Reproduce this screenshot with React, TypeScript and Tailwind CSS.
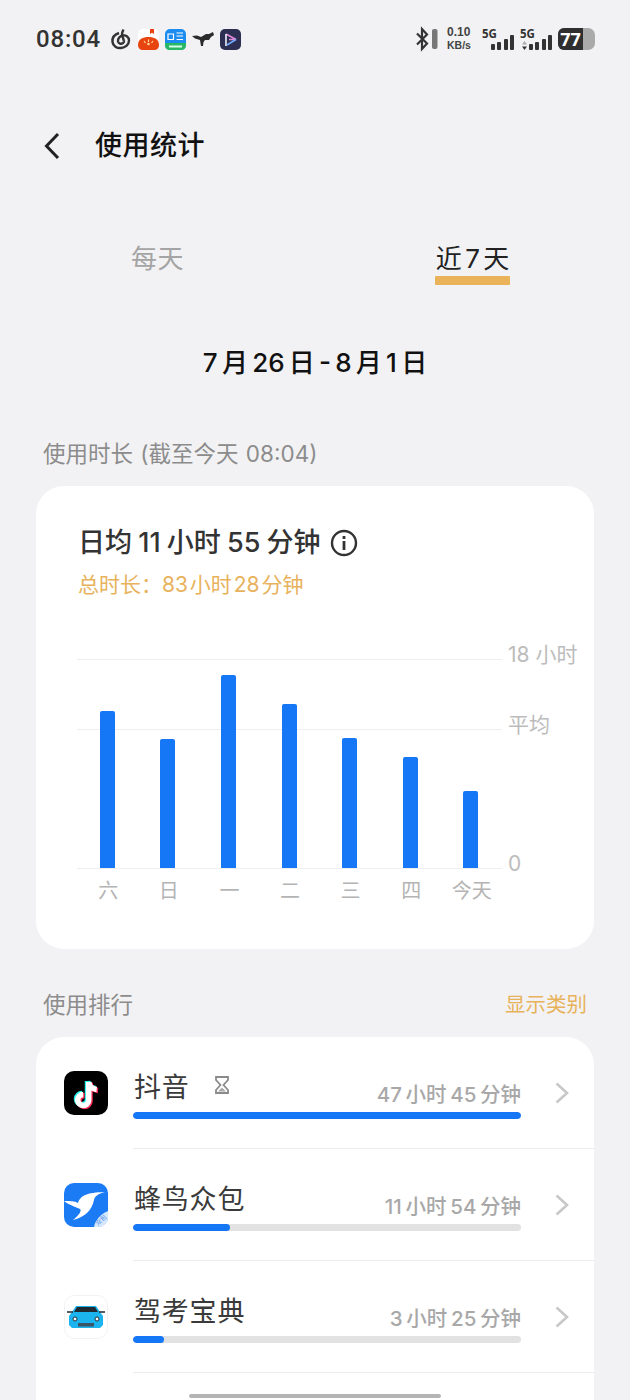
import React from "react";

const FONT = 'Inter,"Noto Sans CJK SC","Noto Sans",sans-serif';

const bars = [
  { label: "六", h: 157 },
  { label: "日", h: 129 },
  { label: "一", h: 193 },
  { label: "二", h: 164 },
  { label: "三", h: 130 },
  { label: "四", h: 111 },
  { label: "今天", h: 77 },
];

function Chevron({ className }: { className?: string }) {
  return (
    <svg className={className} width="16" height="24" viewBox="0 0 16 24" fill="none">
      <path d="M2.5 2.5 L13 12 L2.5 21.5" stroke="currentColor" strokeWidth="2.6" />
    </svg>
  );
}

function Netease() {
  return (
    <svg width="22" height="22" viewBox="0 0 22 22" fill="none" stroke="#333" strokeWidth="2.4">
      <path d="M13.5 1.500 C12 4 11.500 6 12.500 8.500 L14 13" />
      <path d="M9 5 C4.500 6.500 2 10 2.500 14 C3 18 7 20.500 11 20 C15.500 19.500 19 16.500 19 12.500 C19 9 16 7 13 7.500 C10 8 7.500 10.500 8 13.500 C8.500 15.500 11 16.500 13 15 C14 14.200 14.200 13.500 14 13" />
    </svg>
  );
}

function GaugeApp() {
  return (
    <svg width="21" height="21" viewBox="0 0 21 21">
      <rect width="21" height="21" rx="5" fill="#fff" />
      <path d="M0 16 C0 10 5 8 10.500 8 C16 8 21 10 21 16 C21 19 19 21 16 21 H5 C2 21 0 19 0 16Z" fill="#e8440f" />
      <path d="M12 0 H16 V5 L14 3.800 L12 5Z" fill="#e8440f" />
      <path d="M10.500 10.500 V13 M6 12 L7.500 14 M15 12 L13.500 14" stroke="#ffd9a0" strokeWidth="1.200" />
      <circle cx="10.500" cy="15" r="1.300" fill="#ffd9a0" />
    </svg>
  );
}

function HaluoApp() {
  return (
    <svg width="21" height="21" viewBox="0 0 21 21">
      <rect width="21" height="21" rx="5" fill="#1c8cf0" />
      <path d="M0 14 H21 V16 C21 19 19 21 16 21 H5 C2 21 0 19 0 16Z" fill="#27b765" />
      <path d="M3 5 H8.500 V10.500 H3Z M11.500 4 H18 M11.500 7 H18 M11.500 10.500 H18" fill="none" stroke="#fff" strokeWidth="1.200" />
      <path d="M4 17.500 H17" stroke="#d8ffe8" strokeWidth="2" />
    </svg>
  );
}

function BlackBird() {
  return (
    <svg width="22" height="16" viewBox="0 0 22 16" fill="#2b2b2b">
      <path d="M0 5 L5 4.500 L9 6 L14 3 L17 3 L21 1 L22 4 L19 6 L17 9 L13 9 L11.500 11 L11 15 L9 15 L8 9 L3 7.500Z" />
    </svg>
  );
}

function PlayApp() {
  return (
    <svg width="21" height="21" viewBox="0 0 21 21">
      <rect width="21" height="21" rx="5" fill="#2c2f52" />
      <path d="M6 5 L16 10.500 L9 10.500" fill="none" stroke="#e08ad8" strokeWidth="1.600" />
      <path d="M6 5 V17" stroke="#f0f0ff" strokeWidth="1.600" />
      <path d="M7 16 L16 10.500" stroke="#6fa8ff" strokeWidth="1.600" />
    </svg>
  );
}

function Bluetooth() {
  return (
    <svg width="22" height="26" viewBox="0 0 22 26" fill="none">
      <path d="M1 7.500 L11 17.500 L6 23 V3 L11 8.500 L1 18.500" stroke="#333" strokeWidth="2.200" />
      <rect x="16" y="3" width="5.500" height="20" rx="2" fill="#777" />
    </svg>
  );
}

function Signal({ arrows }: { arrows?: boolean }) {
  return (
    <div className="flex flex-col w-[32px]">
      <span className="text-[11.500px] leading-[10px] font-bold text-[#333]">5G</span>
      <div className="flex items-end gap-[2.500px] h-[15px] mt-[-4px] justify-end">
        {arrows && (
          <svg className="mr-[-0.5px]" width="5" height="9" viewBox="0 0 5 9">
            <path d="M2.500 0 L5 3.500 H0Z" fill="#aaa" />
            <path d="M2.500 9 L5 5.500 H0Z" fill="#333" />
          </svg>
        )}
        <span className="w-[4px] h-[6px] rounded-[1px] bg-[#333]" />
        <span className="w-[4px] h-[8px] rounded-[1px] bg-[#333]" />
        <span className="w-[4px] h-[11px] rounded-[1px] bg-[#333]" />
        <span className="w-[4px] h-[15px] rounded-[1px] bg-[#333]" />
      </div>
    </div>
  );
}

function StatusBar() {
  return (
    <div className="flex items-center justify-between h-[78px] pl-[36px] pr-[35px] text-[#333]">
      <div className="flex items-center">
        <span className="text-[24px] font-medium tracking-[0.8px] w-[74px]" style={{ fontFamily: "Roboto, sans-serif" }}>08:04</span>
        <div className="flex items-center gap-[6px]">
          <Netease />
          <GaugeApp />
          <HaluoApp />
          <BlackBird />
          <PlayApp />
        </div>
      </div>
      <div className="flex items-center" style={{ fontFamily: '"Noto Sans",sans-serif' }}>
        <Bluetooth />
        <div className="flex flex-col items-start w-[27px] ml-[9px] mr-[8px] font-bold text-[#444]" style={{ fontFamily: '"Liberation Sans",sans-serif' }}>
          <span className="text-[12px] leading-[13px]">0.10</span>
          <span className="text-[10.500px] leading-[13px] whitespace-nowrap">KB/s</span>
        </div>
        <Signal />
        <div className="w-[6px]" />
        <Signal arrows />
        <div className="w-[6px]" />
        <div className="relative flex w-[37px] h-[22px] rounded-l-[6px] rounded-r-[7px] overflow-hidden bg-[#aaaaaa]">
          <div className="w-[25px] bg-[#2f2f2f] text-white text-[18px] leading-[22px] font-bold text-center">77</div>
        </div>
      </div>
    </div>
  );
}

function Row({ icon, name, time, pct, extra }: { icon: React.ReactNode; name: string; time: string; pct: number; extra?: React.ReactNode }) {
  return (
    <div className="flex h-[112px] pl-[28px]">
      <div className="w-[44px] mt-[34px] h-[44px] shrink-0">{icon}</div>
      <div className="flex-1 ml-[25px] border-b border-[#ececee] flex items-start">
        <div className="w-[388px] pt-[32px]">
          <div className="flex items-center justify-between h-[37px]">
            <div className="flex items-center pl-[1px]">
              <span className="text-[27px] leading-[37px] text-[#3a3a3a] tracking-[0.8px]">{name}</span>
              {extra}
            </div>
            <span className="text-[20.500px] font-medium text-[#a8a8a8] mt-[15px] [word-spacing:-1.8px]">{time}</span>
          </div>
          <div className="h-[7px] mt-[6px] rounded-full bg-[#e2e2e2] overflow-hidden">
            <div className="h-full rounded-full bg-[#1677f6]" style={{ width: `${pct}%` }} />
          </div>
        </div>
        <Chevron className="text-[#c8c8c8] ml-[33px] mt-[44px]" />
      </div>
    </div>
  );
}

export default function App() {
  return (
    <div className="relative w-[630px] h-[1400px] overflow-hidden bg-[#f2f2f4]" style={{ fontFamily: FONT }}>
      <StatusBar />

      <div className="flex items-center h-[48px] mt-[44px] pl-[44px]">
        <svg width="16" height="28" viewBox="0 0 16 28" fill="none">
          <path d="M14 2 L2.500 14 L14 26" stroke="#222" strokeWidth="3" />
        </svg>
        <span className="ml-[35px] text-[27px] font-medium text-[#111] tracking-[0.5px]">使用统计</span>
      </div>

      <div className="flex mt-[71px] h-[60px]">
        <div className="w-[315px] flex justify-center">
          <span className="text-[26px] leading-[36px] text-[#a4a4a4] tracking-[0.5px]">每天</span>
        </div>
        <div className="w-[315px] flex justify-center">
          <div className="flex flex-col w-[75px] items-center">
            <span className="text-[26px] leading-[36px] text-[#222] whitespace-nowrap [word-spacing:-4px]">近 7 天</span>
            <div className="w-full h-[9px] mt-[-1px] rounded-[1px] bg-[#eab35a]" />
          </div>
        </div>
      </div>

      <div className="mt-[42px] h-[40px] text-center text-[26px] font-medium leading-[40px] text-[#111] [word-spacing:-2.7px]">7 月 26 日 - 8 月 1 日</div>

      <div className="mt-[55px] h-[32px] pl-[43px] text-[22.500px] leading-[32px] text-[#8c8c8c] whitespace-nowrap [word-spacing:1px]">使用时长 (截至今天 08:04)</div>

      <div className="mx-[36px] mt-[16px] h-[463px] rounded-[28px] bg-white pl-[42px] pt-[37px]">
        <div className="flex items-center h-[40px]">
          <span className="text-[27px] font-medium text-[#333] leading-[40px] [word-spacing:-1px]">日均 11 小时 55 分钟</span>
          <svg className="ml-[9px]" width="28" height="28" viewBox="0 0 28 28" fill="none">
            <circle cx="14" cy="14" r="12" stroke="#333" strokeWidth="2.400" />
            <rect x="12.600" y="12" width="2.800" height="9" fill="#333" />
            <rect x="12.600" y="7" width="2.800" height="3" fill="#333" />
          </svg>
        </div>
        <div className="mt-[7px] text-[21px] leading-[30px] text-[#e8b25c] [word-spacing:-4px]">总时长：83 小时 28 分钟</div>

        <div className="relative mt-[59px] ml-[-1px] h-[209px] w-[425px]">
          <div className="absolute left-0 right-0 top-0 h-px bg-[#efeff1]" />
          <div className="absolute left-0 right-0 top-[70px] h-px bg-[#efeff1]" />
          <div className="absolute left-0 right-0 top-[209px] h-px bg-[#efeff1]" />
          <span className="absolute left-[431px] top-[-20px] text-[21px] leading-[32px] text-[#bcbcbc] whitespace-nowrap">18 小时</span>
          <span className="absolute left-[431px] top-[50px] text-[21px] leading-[32px] text-[#bcbcbc] whitespace-nowrap">平均</span>
          <span className="absolute left-[431px] top-[189px] text-[21px] leading-[32px] text-[#bcbcbc]">0</span>
          <div className="relative flex items-end h-full w-[424px]">
            {bars.map((b) => (
              <div key={b.label} className="flex-1 flex justify-center">
                <div className="w-[15px] rounded-t-[2px] bg-[#1677f6]" style={{ height: b.h }} />
              </div>
            ))}
          </div>
        </div>
        <div className="flex w-[424px] mt-[9px]">
          {bars.map((b) => (
            <div key={b.label} className="flex-1 text-center text-[20px] leading-[28px] text-[#b4b4b4]">{b.label}</div>
          ))}
        </div>
      </div>

      <div className="flex items-center justify-between h-[32px] mt-[40px] pl-[43px] pr-[43px]">
        <span className="text-[22.500px] leading-[32px] text-[#8c8c8c]">使用排行</span>
        <span className="text-[20.500px] leading-[32px] text-[#e8b25c]">显示类别</span>
      </div>

      <div className="mx-[36px] mt-[16px] rounded-t-[28px] bg-white pb-[60px]">
        <Row
          name="抖音"
          time="47 小时 45 分钟"
          pct={100}
          extra={
            <svg className="ml-[24px] mb-[6px]" width="16" height="18" viewBox="0 0 16 18" fill="none">
              <path d="M2 1 H14 V4 L9.500 9 L14 14 V17 H2 V14 L6.500 9 L2 4Z" stroke="#8a8a8a" strokeWidth="1.800" />
              <path d="M4 15.500 L8 11.500 L12 15.500Z" fill="#a8a8a8" />
            </svg>
          }
          icon={
            <svg width="44" height="44" viewBox="0 0 44 44">
              <rect width="44" height="44" rx="10" fill="#000" />
              <g fill="none" strokeWidth="5.500">
                <path d="M23.500 10 V28 C23.500 31.500 21 33.500 18 33.500 C15 33.500 12.500 31 12.500 28 C12.500 25 15 22.500 18 22.500" stroke="#25f4ee" />
                <path d="M23.500 10 C24 14 27 17 31.500 17.500" stroke="#25f4ee" />
                <path d="M26 12 V30 C26 33.500 23.500 35.500 20.500 35.500 C17.500 35.500 15 33 15 30 C15 27 17.500 24.500 20.500 24.500" stroke="#fe2c55" />
                <path d="M26 12 C26.500 16 29.500 19 34 19.500" stroke="#fe2c55" />
                <path d="M24.700 11 V29 C24.700 32.500 22.200 34.500 19.200 34.500 C16.200 34.500 13.700 32 13.700 29 C13.700 26 16.200 23.500 19.200 23.500" stroke="#fff" />
                <path d="M24.700 11 C25.200 15 28.200 18 32.700 18.500" stroke="#fff" />
              </g>
            </svg>
          }
        />
        <Row
          name="蜂鸟众包"
          time="11 小时 54 分钟"
          pct={25}
          icon={
            <svg width="44" height="44" viewBox="0 0 44 44">
              <rect width="44" height="44" rx="10" fill="#1b7bf5" />
              <path d="M0 18 C6 18 11 18 14 20 C16 13 22 9.500 41 9 C34 11 31 13 30 17 C28 27 21 34 9 37 C15 32 18 28 16 26 C12 24 5 22 0 18Z" fill="#fff" />
              <path d="M30 44 C31 37 37 31 44 28 V34 C44 40 40 44 34 44Z" fill="#d7e8fd" />
              <text x="37" y="39" fontSize="6" fill="#3d86e8" textAnchor="middle" transform="rotate(-40 37 37)">众包</text>
            </svg>
          }
        />
        <Row
          name="驾考宝典"
          time="3 小时 25 分钟"
          pct={8}
          icon={
            <svg width="44" height="44" viewBox="0 0 44 44">
              <rect x="0.500" y="0.500" width="43" height="43" rx="10" fill="#fff" stroke="#f2f2f2" />
              <path d="M8 17 L12 11 H32 L36 17 L39 21 V30 L36 33 H8 L5 30 V21Z" fill="#1cb4ef" />
              <path d="M10 17 L13 12 H31 L34 17Z" fill="#1f2a33" />
              <path d="M3 17 H9 M35 17 H41" stroke="#1f2a33" strokeWidth="1.500" />
              <circle cx="11" cy="24" r="2" fill="#fff" stroke="#1f2a33" />
              <circle cx="33" cy="24" r="2" fill="#fff" stroke="#1f2a33" />
              <rect x="14" y="28" width="16" height="3.500" fill="#3a5566" />
            </svg>
          }
        />
      </div>

      <div className="absolute left-[189px] top-[1394px] w-[252px] h-[4px] rounded-full bg-[#b4b4b4]" />
    </div>
  );
}
